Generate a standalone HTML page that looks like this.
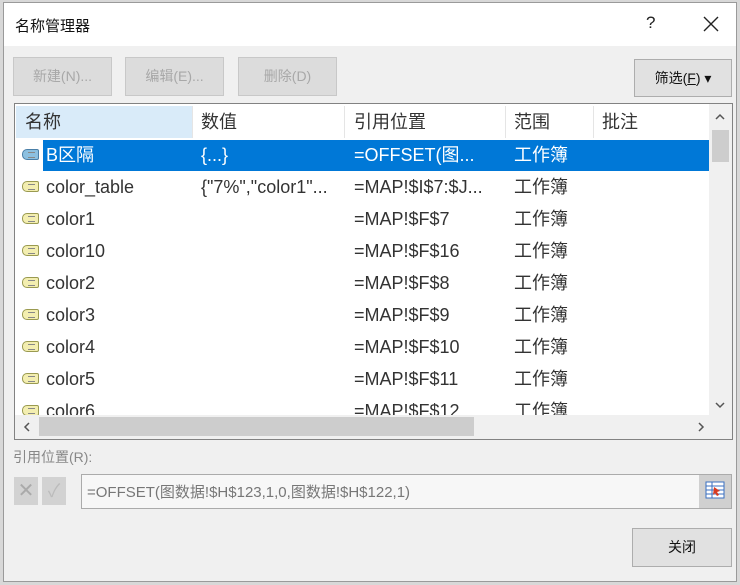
<!DOCTYPE html>
<html><head><meta charset="utf-8"><style>
*{margin:0;padding:0;box-sizing:border-box}
body{width:740px;height:585px;background:#d8d8d8;font-family:"Liberation Sans","Noto Sans CJK SC",sans-serif;position:relative;overflow:hidden}
.dlg{position:absolute;left:3px;top:2px;width:734px;height:580px;background:#f0f0f0;border:1px solid #9a9a9a}
.title{position:absolute;left:0;top:0;width:732px;height:43px;background:#fff}
.abs{position:absolute}
.btn{position:absolute;background:#dcdcdc;border:1px solid #c8c8c8;color:#a8a8a8;font-size:14px;text-align:center;line-height:36px}
.list{position:absolute;left:10px;top:100px;width:719px;height:337px;background:#fff;border:1px solid #828282}
.hdr{position:absolute;top:2px;height:32px;font-size:18px;color:#333;line-height:32px;border-right:1px solid #e5e5e5}
.row{position:absolute;left:0;height:32px;width:694px;font-size:18px;color:#333;line-height:30px}
.row span{position:absolute;top:0;white-space:nowrap}
.ic{position:absolute;left:7px;top:9px;width:17px;height:11px;background:#f3eeb0;border:1px solid #9a9a50;border-radius:5px 2px 2px 5px}
.ic:after{content:"";position:absolute;left:5px;top:2px;width:7px;height:4px;border-top:1px solid #888;border-bottom:1px solid #888}
</style></head><body>
<div class="dlg">
<div class="title"></div>
<div class="abs" style="left:11px;top:12px;font-size:15px;color:#111">名称管理器</div>
<div class="abs" style="left:642px;top:10px;font-size:17px;color:#222">?</div>
<svg class="abs" style="left:699px;top:13px" width="16" height="16"><path d="M1 1L15 15M15 1L1 15" stroke="#222" stroke-width="1.4"/></svg>
<div class="btn" style="left:9px;top:54px;width:99px;height:39px">新建(N)...</div>
<div class="btn" style="left:121px;top:54px;width:99px;height:39px">编辑(E)...</div>
<div class="btn" style="left:234px;top:54px;width:99px;height:39px">删除(D)</div>
<div class="btn" style="left:630px;top:56px;width:98px;height:38px;background:#e1e1e1;border-color:#adadad;color:#111">筛选(<u>F</u>) ▾</div>
<div class="list">
 <div class="hdr" style="left:1px;width:177px;background:#d9ebf9;padding-left:9px">名称</div>
 <div class="hdr" style="left:178px;width:152px;padding-left:8px">数值</div>
 <div class="hdr" style="left:330px;width:161px;padding-left:9px">引用位置</div>
 <div class="hdr" style="left:491px;width:88px;padding-left:8px">范围</div>
 <div class="hdr" style="left:579px;width:115px;padding-left:8px;border:none">批注</div>
 <div style="position:absolute;left:0;top:36px;width:694px;height:275px;overflow:hidden">
  <div class="row" style="top:0"><div style="position:absolute;left:28px;top:0;width:666px;height:31px;background:#0078d7"></div><div class="ic" style="background:#8cc0e0;border-color:#4a7fa8"></div><span style="left:31px;color:#fff">B区隔</span><span style="left:186px;color:#fff">{...}</span><span style="left:339px;color:#fff">=OFFSET(图...</span><span style="left:499px;color:#fff">工作簿</span></div>
  <div class="row" style="top:32px"><div class="ic"></div><span style="left:31px">color_table</span><span style="left:186px">{"7%","color1"...</span><span style="left:339px">=MAP!$I$7:$J...</span><span style="left:499px">工作簿</span></div>
  <div class="row" style="top:64px"><div class="ic"></div><span style="left:31px">color1</span><span style="left:339px">=MAP!$F$7</span><span style="left:499px">工作簿</span></div>
  <div class="row" style="top:96px"><div class="ic"></div><span style="left:31px">color10</span><span style="left:339px">=MAP!$F$16</span><span style="left:499px">工作簿</span></div>
  <div class="row" style="top:128px"><div class="ic"></div><span style="left:31px">color2</span><span style="left:339px">=MAP!$F$8</span><span style="left:499px">工作簿</span></div>
  <div class="row" style="top:160px"><div class="ic"></div><span style="left:31px">color3</span><span style="left:339px">=MAP!$F$9</span><span style="left:499px">工作簿</span></div>
  <div class="row" style="top:192px"><div class="ic"></div><span style="left:31px">color4</span><span style="left:339px">=MAP!$F$10</span><span style="left:499px">工作簿</span></div>
  <div class="row" style="top:224px"><div class="ic"></div><span style="left:31px">color5</span><span style="left:339px">=MAP!$F$11</span><span style="left:499px">工作簿</span></div>
  <div class="row" style="top:256px"><div class="ic"></div><span style="left:31px">color6</span><span style="left:339px">=MAP!$F$12</span><span style="left:499px">工作簿</span></div>
 </div>
 <div style="position:absolute;left:694px;top:0;width:23px;height:311px;background:#f0f0f0"></div>
 <svg style="position:absolute;left:700px;top:9px" width="10" height="7"><path d="M1 6L5 2L9 6" stroke="#555" stroke-width="1.5" fill="none"/></svg>
 <div style="position:absolute;left:697px;top:26px;width:17px;height:32px;background:#cdcdcd"></div>
 <svg style="position:absolute;left:700px;top:298px" width="10" height="7"><path d="M1 1L5 5L9 1" stroke="#555" stroke-width="1.5" fill="none"/></svg>
 <div style="position:absolute;left:0;top:311px;width:717px;height:24px;background:#f0f0f0"></div>
 <div style="position:absolute;left:24px;top:313px;width:435px;height:19px;background:#cdcdcd"></div>
 <svg style="position:absolute;left:8px;top:318px" width="7" height="10"><path d="M6 1L2 5L6 9" stroke="#555" stroke-width="1.5" fill="none"/></svg>
 <svg style="position:absolute;left:683px;top:318px" width="7" height="10"><path d="M1 1L5 5L1 9" stroke="#555" stroke-width="1.5" fill="none"/></svg>
</div>
<div class="abs" style="left:9px;top:444px;font-size:14px;color:#888">引用位置(R):</div>
<div class="abs" style="left:10px;top:474px;width:24px;height:28px;background:#d2d2d2;color:#aaa;text-align:center;font-size:20px;line-height:28px">✕</div>
<div class="abs" style="left:38px;top:474px;width:24px;height:28px;background:#d2d2d2;color:#bbb;text-align:center;font-size:18px;line-height:28px">✓</div>
<div class="abs" style="left:77px;top:471px;width:651px;height:35px;background:#f7f7f7;border:1px solid #ababab"></div>
<div class="abs" style="left:83px;top:478px;font-size:15px;color:#777">=OFFSET(图数据!$H$123,1,0,图数据!$H$122,1)</div>
<div class="abs" style="left:695px;top:472px;width:32px;height:33px;background:#d0d0d0">
 <svg width="32" height="33" viewBox="0 0 32 33"><rect x="7" y="7" width="18" height="16" fill="#fff" stroke="#3a6fc0"/><path d="M7 11h18M7 15h18M7 19h18M13 7v16" stroke="#3a6fc0"/><path d="M15 12l6 4-3 1 2 3-2 1-2-3-2 2z" fill="#d83a20"/></svg>
</div>
<div class="btn" style="left:628px;top:525px;width:100px;height:39px;background:#e1e1e1;border-color:#adadad;color:#111;line-height:37px">关闭</div>
</div>
</body></html>
